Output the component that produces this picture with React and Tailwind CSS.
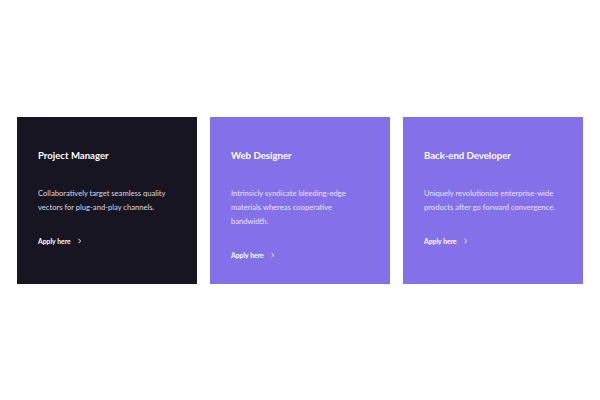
export default function App() {
  const cards = [
    { title: "Project Manager", text: "Collaboratively target seamless quality vectors for plug-and-play channels.", dark: true },
    { title: "Web Designer", text: "Intrinsicly syndicate bleeding-edge materials whereas cooperative bandwidth." },
    { title: "Back-end Developer", text: "Uniquely revolutionize enterprise-wide products after go forward convergence." },
  ];
  return (
    <div className="w-[600px] h-[400px] bg-white flex items-center justify-center" style={{ fontFamily: "Lato, 'Noto Sans', sans-serif" }}>
      <div className="flex gap-[13px] items-stretch mt-[1px]">
        {cards.map((c) => (
          <div key={c.title} className={`w-[180px] h-[167px] pt-[32px] pl-[21px] pr-[21px] flex flex-col ${c.dark ? "bg-[#161521]" : "bg-[#8471ea]"}`}>
            <h3 className="text-[9.6px] font-bold text-white leading-[13px]">{c.title}</h3>
            <p className={`mt-[24px] text-[7.6px] leading-[14px] ${c.dark ? "text-[#dcdce4]" : "text-[#e8e4fb]"}`}>{c.text}</p>
            <div className="mt-[22px] flex items-center gap-[6px] text-white text-[6.8px] font-bold leading-[10px]">
              <span>Apply here</span>
              <svg width="5" height="6" viewBox="0 0 5 6" fill="none" stroke="white" strokeWidth="0.9">
                <path d="M1.5 0.8 L3.6 3 L1.5 5.2" />
              </svg>
            </div>
          </div>
        ))}
      </div>
    </div>
  );
}
